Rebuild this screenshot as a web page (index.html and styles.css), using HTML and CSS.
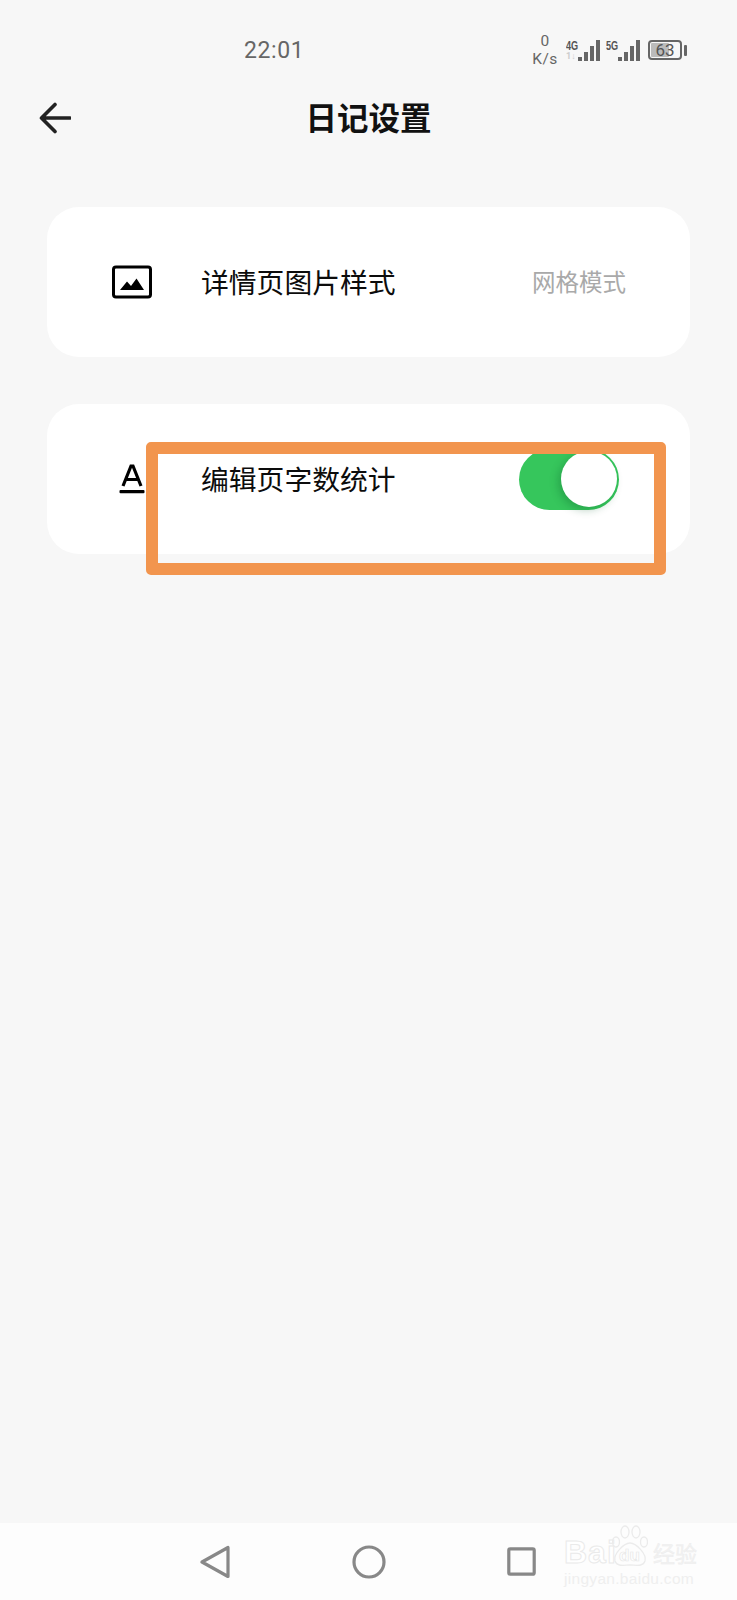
FILE: index.html
```html
<!DOCTYPE html>
<html lang="zh">
<head>
<meta charset="utf-8">
<title>日记设置</title>
<link rel="stylesheet" href="styles.css">
</head>
<body>
<div class="page">
  <div class="status">
    <span class="time">22:01</span>
    <div class="indicators">
      <div class="speed"><span>0</span><span>K/s</span></div>
      <div class="net net-4g">
        <div class="net-labels"><span class="gen">4G</span><span class="updown">1↓</span></div>
        <div class="bars"><i class="b1"></i><i class="b2"></i><i class="b3"></i><i class="b4"></i></div>
      </div>
      <div class="net net-5g">
        <div class="net-labels"><span class="gen">5G</span></div>
        <div class="bars"><i class="b1"></i><i class="b2"></i><i class="b3"></i><i class="b4"></i></div>
      </div>
      <div class="battery">
        <div class="battery-body"><span class="battery-level" style="width:63%"></span><span class="battery-text">63</span></div>
        <div class="battery-nub"></div>
      </div>
    </div>
  </div>

  <header class="header">
    <svg class="back" width="32" height="32" viewBox="0 0 32 32" fill="none" stroke="#222" stroke-width="3.600" stroke-linecap="round" stroke-linejoin="round"><path d="M31 16H3M16 2.500 2.500 16 16 29.500"/></svg>
    <h1 class="title">日记设置</h1>
    <span></span>
  </header>

  <main class="cards">
    <section class="card">
      <svg class="icon" width="40" height="34" viewBox="0 0 40 34"><rect x="1.500" y="2" width="37" height="30" rx="2.500" fill="none" stroke="#000" stroke-width="3"/><path d="M8 25 15 16.500 19 21 24.500 13.500 32 25Z" fill="#000"/></svg>
      <span class="label">详情页图片样式</span>
      <span class="value">网格模式</span>
    </section>
    <section class="card">
      <svg class="icon" width="40" height="34" viewBox="0 0 40 34"><path d="M11 24 19 4H21L29 24M13.500 17.500H26.500" fill="none" stroke="#000" stroke-width="3.200"/><rect x="7.500" y="28" width="25" height="3.200" rx="1" fill="#000"/></svg>
      <span class="label">编辑页字数统计</span>
      <div class="toggle"><div class="knob"></div></div>
      <div class="highlight"></div>
    </section>
  </main>

  <nav class="nav">
    <svg width="30" height="34" viewBox="0 0 30 34" fill="none" stroke="#888" stroke-width="3.200" stroke-linejoin="round"><path d="M28 2.500V31.500L2 17Z"/></svg>
    <svg width="34" height="34" viewBox="0 0 34 34" fill="none" stroke="#888" stroke-width="3.200"><circle cx="17" cy="17" r="15"/></svg>
    <svg class="nav-square" width="29" height="29" viewBox="0 0 29 29" fill="none" stroke="#888" stroke-width="3.200" stroke-linejoin="round"><rect x="1.800" y="1.800" width="25.400" height="25.400" rx="1.500"/></svg>
    <div class="watermark">
      <div class="wm-row">
        <span class="wm-bai">Bai</span>
        <div class="wm-paw">
          <svg width="36" height="42" viewBox="0 0 36 42" fill="none" stroke="#ebebeb" stroke-width="1.300"><ellipse cx="4" cy="17" rx="3.500" ry="5"/><ellipse cx="13" cy="7" rx="4" ry="6"/><ellipse cx="24" cy="7" rx="4" ry="6"/><ellipse cx="32" cy="17" rx="3.500" ry="5"/><path d="M18 18C24 18 35 29 33 36 31 42 24 40 18 40 12 40 5 42 3 36 1 29 12 18 18 18Z"/></svg>
          <span class="wm-du">du</span>
        </div>
        <span class="wm-jy">经验</span>
      </div>
      <div class="wm-url">jingyan.baidu.com</div>
    </div>
  </nav>
</div>
</body>
</html>
```
FILE: styles.css
```css
* { box-sizing: border-box; }
html, body { margin: 0; padding: 0; }
body { background: #f7f7f7; font-family: "Noto Sans CJK SC", "Noto Sans", sans-serif; }
.page { width: 737px; height: 1600px; display: flex; flex-direction: column; overflow: hidden; }

.status { height: 100px; flex: none; display: flex; align-items: center; padding: 0 50px 0 244px; color: #666; font-family: Roboto, "Noto Sans", sans-serif; }
.time { font-size: 23px; letter-spacing: .6px; }
.indicators { margin-left: auto; display: flex; align-items: center; }
.speed { display: flex; flex-direction: column; align-items: center; font-size: 15.500px; line-height: 18px; width: 40px; letter-spacing: .5px; margin-right: 1px; }
.net { display: flex; align-items: flex-end; height: 21px; }
.net-5g { margin-left: 6px; }
.net-labels { display: flex; flex-direction: column; justify-content: space-between; height: 21px; width: 12px; }
.gen { font-size: 13px; line-height: 11px; font-weight: 700; color: #555; font-family: "Liberation Sans", sans-serif; transform: scaleX(.7); transform-origin: left; white-space: nowrap; }
.updown { font-size: 9px; line-height: 9px; color: #ccc; font-weight: 700; white-space: nowrap; }
.bars { display: flex; align-items: flex-end; gap: 2px; height: 21px; }
.bars i { display: block; width: 4px; background: #666; }
.b1 { height: 4px; }
.b2 { height: 9px; }
.b3 { height: 15px; }
.b4 { height: 21px; }
.battery { display: flex; align-items: center; margin-left: 8px; gap: 2px; }
.battery-body { position: relative; width: 34px; height: 20px; border: 2px solid #666; border-radius: 4px; padding: 1px; display: flex; }
.battery-level { display: block; height: 100%; background: #bbb; border-radius: 1px; }
.battery-text { position: absolute; inset: 0; display: flex; align-items: center; justify-content: center; font-size: 17px; line-height: 1; color: #555; }
.battery-nub { width: 3px; height: 11px; background: #666; border-radius: 1px; }

.header { height: 32px; flex: none; display: grid; grid-template-columns: 1fr auto 1fr; align-items: center; margin-top: 2px; }
.title { margin: 0; font-size: 31.500px; line-height: 32px; font-weight: 700; color: #111; transform: translateY(-2px); }
.back { display: block; margin-left: 39px; }

.cards { flex: 1; display: flex; flex-direction: column; gap: 47px; padding: 73px 47px 0; }
.card { position: relative; height: 150px; background: #fff; border-radius: 32px; display: flex; align-items: center; padding: 0 64px 0 65px; }
.icon { flex: none; display: block; }
.label { margin: 0 0 3px 49px; font-size: 27.800px; line-height: 36px; color: #0c0c0c; }
.value { margin: 0 0 2px auto; font-size: 23.500px; line-height: 32px; color: #a9a9a9; }

.toggle { position: relative; margin-left: auto; margin-right: 7px; width: 100px; height: 61px; border-radius: 31px; background: #36c65c; }
.knob { position: absolute; top: 2.500px; right: 2.500px; width: 56px; height: 56px; border-radius: 50%; background: #fff; box-shadow: -3px 3px 8px rgba(10, 90, 40, .3); }

.highlight { position: absolute; left: 99px; top: 38px; width: 520px; height: 133px; border: 12px solid #f2954e; border-radius: 5px; }

.nav { position: relative; height: 77px; flex: none; background: #fdfdfd; display: flex; align-items: center; gap: 122px; padding: 0 0 0 200px; }
.nav-square { margin-left: -1px; }
.watermark { position: absolute; left: 564px; top: -3px; width: 134px; color: #e6e6e6; font-family: "Liberation Sans", sans-serif; }
.wm-row { display: flex; align-items: flex-end; height: 47px; }
.wm-bai { font-size: 32px; line-height: 30px; width: 48px; letter-spacing: 1px; font-weight: 700; color: #fff; -webkit-text-stroke: 1px #eaeaea; }
.wm-paw { position: relative; width: 37px; height: 42px; flex: none; }
.wm-paw svg { display: block; }
.wm-du { position: absolute; left: 7px; bottom: 2px; font-size: 17px; line-height: 18px; font-weight: 700; color: #fff; -webkit-text-stroke: .7px #e8e8e8; }
.wm-jy { margin-left: 4px; font-family: "Noto Sans CJK SC", sans-serif; font-size: 22px; line-height: 30px; white-space: nowrap; color: #f2f2f2; -webkit-text-stroke: .4px #ececec; }
.wm-url { margin-top: 3px; font-size: 15.500px; line-height: 18px; letter-spacing: .3px; white-space: nowrap; color: #efefef; }
```
